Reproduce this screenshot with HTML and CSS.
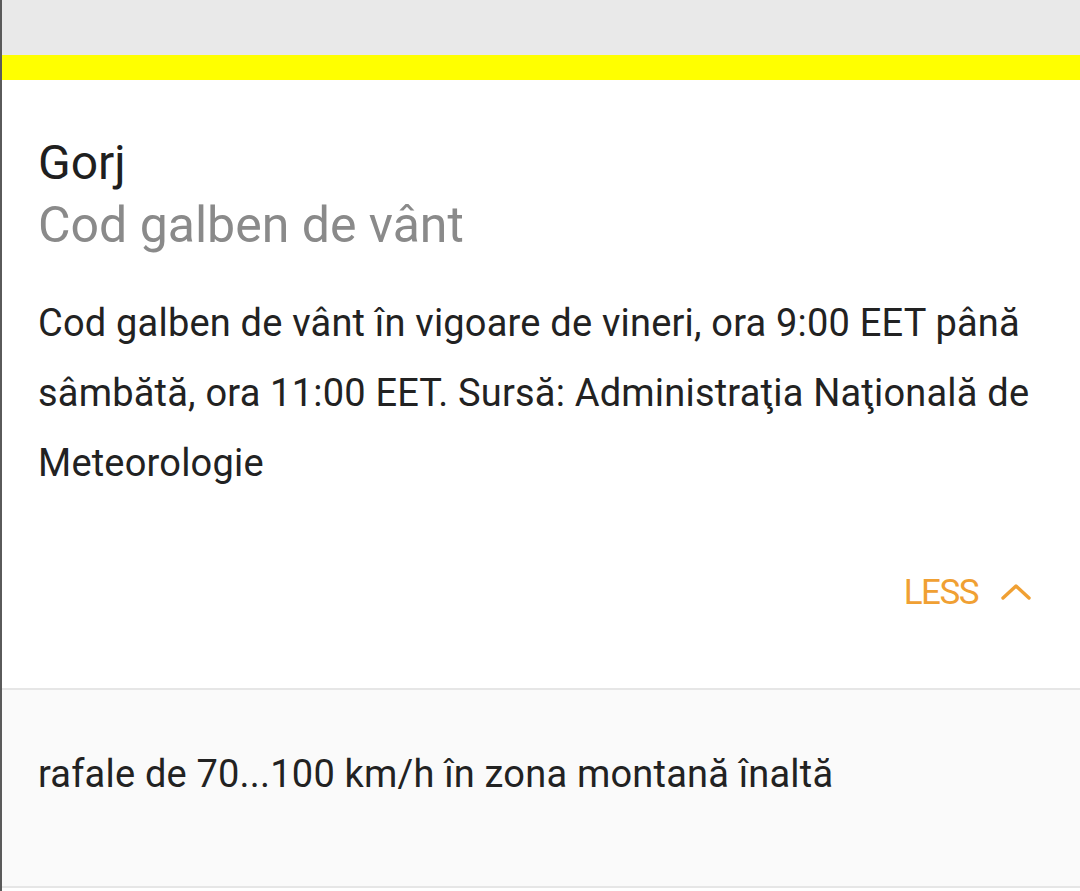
FILE: index.html
```html
<!DOCTYPE html>
<html lang="ro">
<head>
<meta charset="utf-8">
<link rel="stylesheet" href="styles.css">
</head>
<body>
<div class="page">
  <div class="topbar"></div>
  <div class="stripe"></div>
  <section class="card">
    <h1 class="region">Gorj</h1>
    <h2 class="kind">Cod galben de vânt</h2>
    <p class="desc">Cod galben de vânt în vigoare de vineri, ora 9:00 EET până sâmbătă, ora 11:00 EET. Sursă: Administraţia Naţională de Meteorologie</p>
    <div class="actions">
      <button class="less">LESS
        <svg class="chev" width="34" height="20" viewBox="0 0 34 20"><path d="M3 17 L16 5 L29 17" fill="none" stroke="#f0a033" stroke-width="3.4" stroke-linecap="round" stroke-linejoin="round"/></svg>
      </button>
    </div>
  </section>
  <section class="detail">
    <p class="detail-text">rafale de 70...100 km/h în zona montană înaltă</p>
  </section>
</div>
</body>
</html>
```

FILE: styles.css
```css
html, body {
  margin: 0;
  padding: 0;
  background: #ffffff;
}
body {
  font-family: Roboto, "Noto Sans", sans-serif;
  color: #222222;
}
.page {
  width: 1078px;
  height: 891px;
  border-left: 2px solid #5a5a5a;
  display: flex;
  flex-direction: column;
}
.topbar {
  height: 55px;
  background: #e9e9e9;
}
.stripe {
  height: 25px;
  background: #ffff00;
}
.card {
  background: #ffffff;
  padding: 51px 36px 0 36px;
  height: 557px;
  border-bottom: 2px solid #e6e6e6;
  display: flex;
  flex-direction: column;
}
.region {
  margin: 0;
  font-size: 48px;
  font-weight: 400;
  line-height: 64px;
  color: #1f1f1f;
}
.kind {
  margin: 0;
  font-size: 50px;
  font-weight: 400;
  line-height: 60px;
  color: #8a8a8a;
}
.desc {
  margin: 33px 0 0 0;
  font-size: 38px;
  line-height: 70px;
  color: #222222;
  letter-spacing: 0.2px;
  width: 1000px;
}
.actions {
  display: flex;
  justify-content: flex-end;
  margin-top: 75px;
  padding-right: 10px;
}
.less {
  background: none;
  border: 0;
  padding: 0;
  font-family: inherit;
  font-size: 35px;
  line-height: 40px;
  color: #f0a033;
  display: flex;
  align-items: center;
  gap: 22px;
  letter-spacing: -1.5px;
}
.chev {
  margin-top: -4px;
}
.detail {
  background: #fafafa;
  height: 198px;
  border-bottom: 2px solid #e6e6e6;
  display: flex;
  align-items: flex-start;
  padding: 62px 36px 0 36px;
  box-sizing: border-box;
}
.detail-text {
  margin: 0;
  font-size: 38px;
  line-height: 44px;
  letter-spacing: 0.2px;
  color: #222222;
}
```
